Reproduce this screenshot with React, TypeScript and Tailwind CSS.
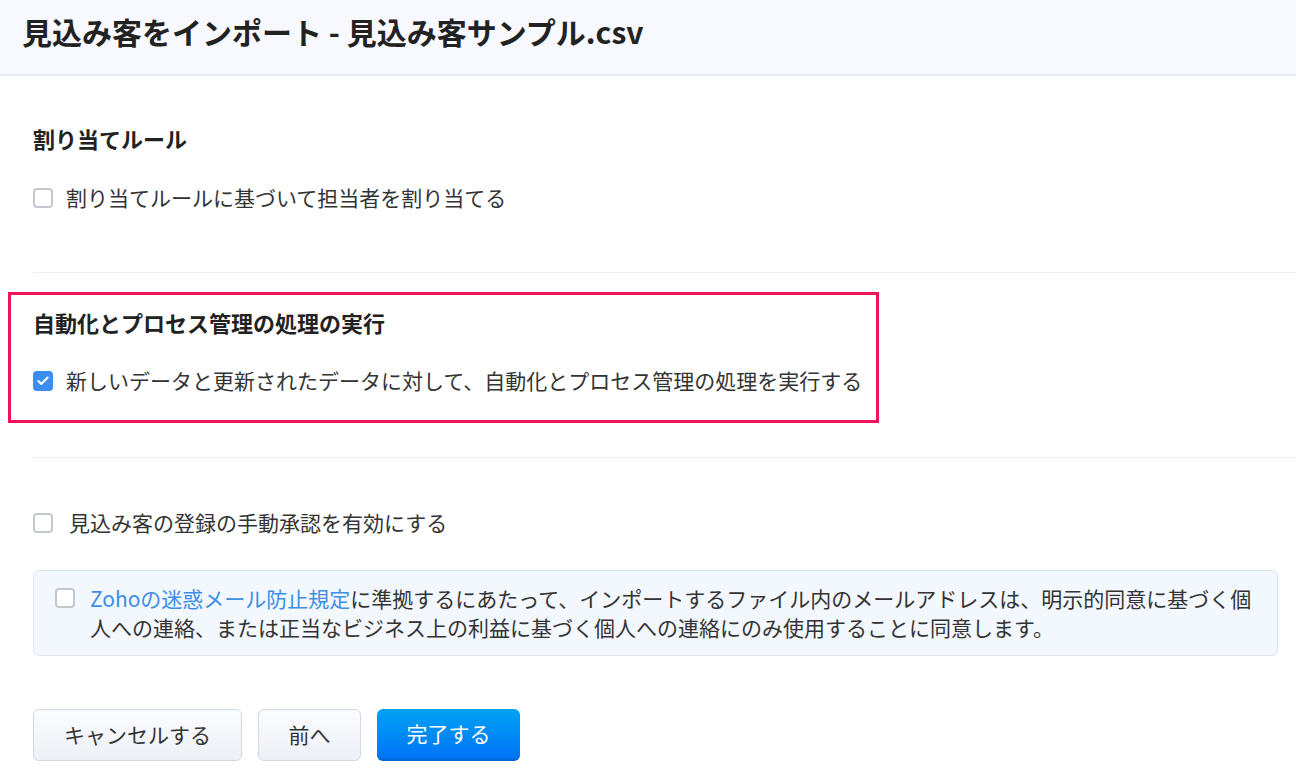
import { Check } from "lucide-react";

const FONT = "font-['Noto_Sans_CJK_JP','Noto_Sans',sans-serif]";

function Box({ checked = false }: { checked?: boolean }) {
  if (checked) {
    return (
      <span className="flex h-[20px] w-[20px] shrink-0 items-center justify-center rounded-[4px] bg-[#3b8eef]">
        <Check className="h-[14px] w-[14px] text-white" strokeWidth={3.5} />
      </span>
    );
  }
  return <span className="block h-[20px] w-[20px] shrink-0 rounded-[4px] border-2 border-[#c3c8cf] bg-white" />;
}

function CheckRow({ label, checked, gap = "gap-[13px]" }: { label: string; checked?: boolean; gap?: string }) {
  return (
    <label className={`flex items-center ${gap} text-[21px] leading-none text-[#333]`}>
      <Box checked={checked} />
      <span>{label}</span>
    </label>
  );
}

export default function App() {
  return (
    <div className={`min-h-screen bg-white ${FONT}`}>
      <header className="flex h-[76px] items-center border-b-2 border-[#e6ebf2] bg-[#f7f9fe] px-[22px] pb-[12px]">
        <h1 className="text-[30px] font-bold leading-none text-[#222]">見込み客をインポート - 見込み客サンプル.csv</h1>
      </header>

      <main className="pl-[33px]">
        <h2 className="mt-[51px] text-[22px] font-bold leading-none text-[#222]">割り当てルール</h2>
        <div className="mt-[38px]">
          <CheckRow label="割り当てルールに基づいて担当者を割り当てる" />
        </div>

        <div className="mt-[64px] h-px bg-[#efefef]" />

        <section className="-ml-[25px] mt-[19px] w-[871px] border-[3px] border-[#f0145a] pb-[29px] pl-[22px] pt-[16px]">
          <h2 className="text-[22px] font-bold leading-none text-[#222]">自動化とプロセス管理の処理の実行</h2>
          <div className="mt-[37px]">
            <CheckRow checked label="新しいデータと更新されたデータに対して、自動化とプロセス管理の処理を実行する" />
          </div>
        </section>

        <div className="mt-[34px] h-px bg-[#efefef]" />

        <div className="mt-[54px]">
          <CheckRow gap="gap-[16px]" label="見込み客の登録の手動承認を有効にする" />
        </div>

        <div className="mr-[18px] mt-[37px] flex items-start gap-[15px] rounded-[6px] border border-[#dde6f2] bg-[#f3f7fe] pb-[13px] pl-[21px] pr-[16px] pt-[13px]">
          <div className="mt-[4px]">
            <Box />
          </div>
          <p className="text-[21px] leading-[29px] text-[#333]">
            <span className="text-[#3d8fe6]">Zohoの迷惑メール防止規定</span>
            に準拠するにあたって、インポートするファイル内のメールアドレスは、明示的同意に基づく個
            <br />
            人への連絡、または正当なビジネス上の利益に基づく個人への連絡にのみ使用することに同意します。
          </p>
        </div>

        <div className="mt-[53px] flex gap-[16px]">
          <button className="h-[52px] w-[209px] rounded-[6px] border border-[#d3d8e1] bg-gradient-to-b from-[#fbfcfe] to-[#edf0f6] text-[21px] text-[#333]">
            キャンセルする
          </button>
          <button className="h-[52px] w-[103px] rounded-[6px] border border-[#d3d8e1] bg-gradient-to-b from-[#fbfcfe] to-[#edf0f6] text-[21px] text-[#333]">
            前へ
          </button>
          <button className="h-[52px] w-[143px] rounded-[6px] border-b-2 border-[#0062d6] bg-gradient-to-b from-[#00a2f2] to-[#0072f6] text-[21px] text-white">
            完了する
          </button>
        </div>
      </main>
    </div>
  );
}
